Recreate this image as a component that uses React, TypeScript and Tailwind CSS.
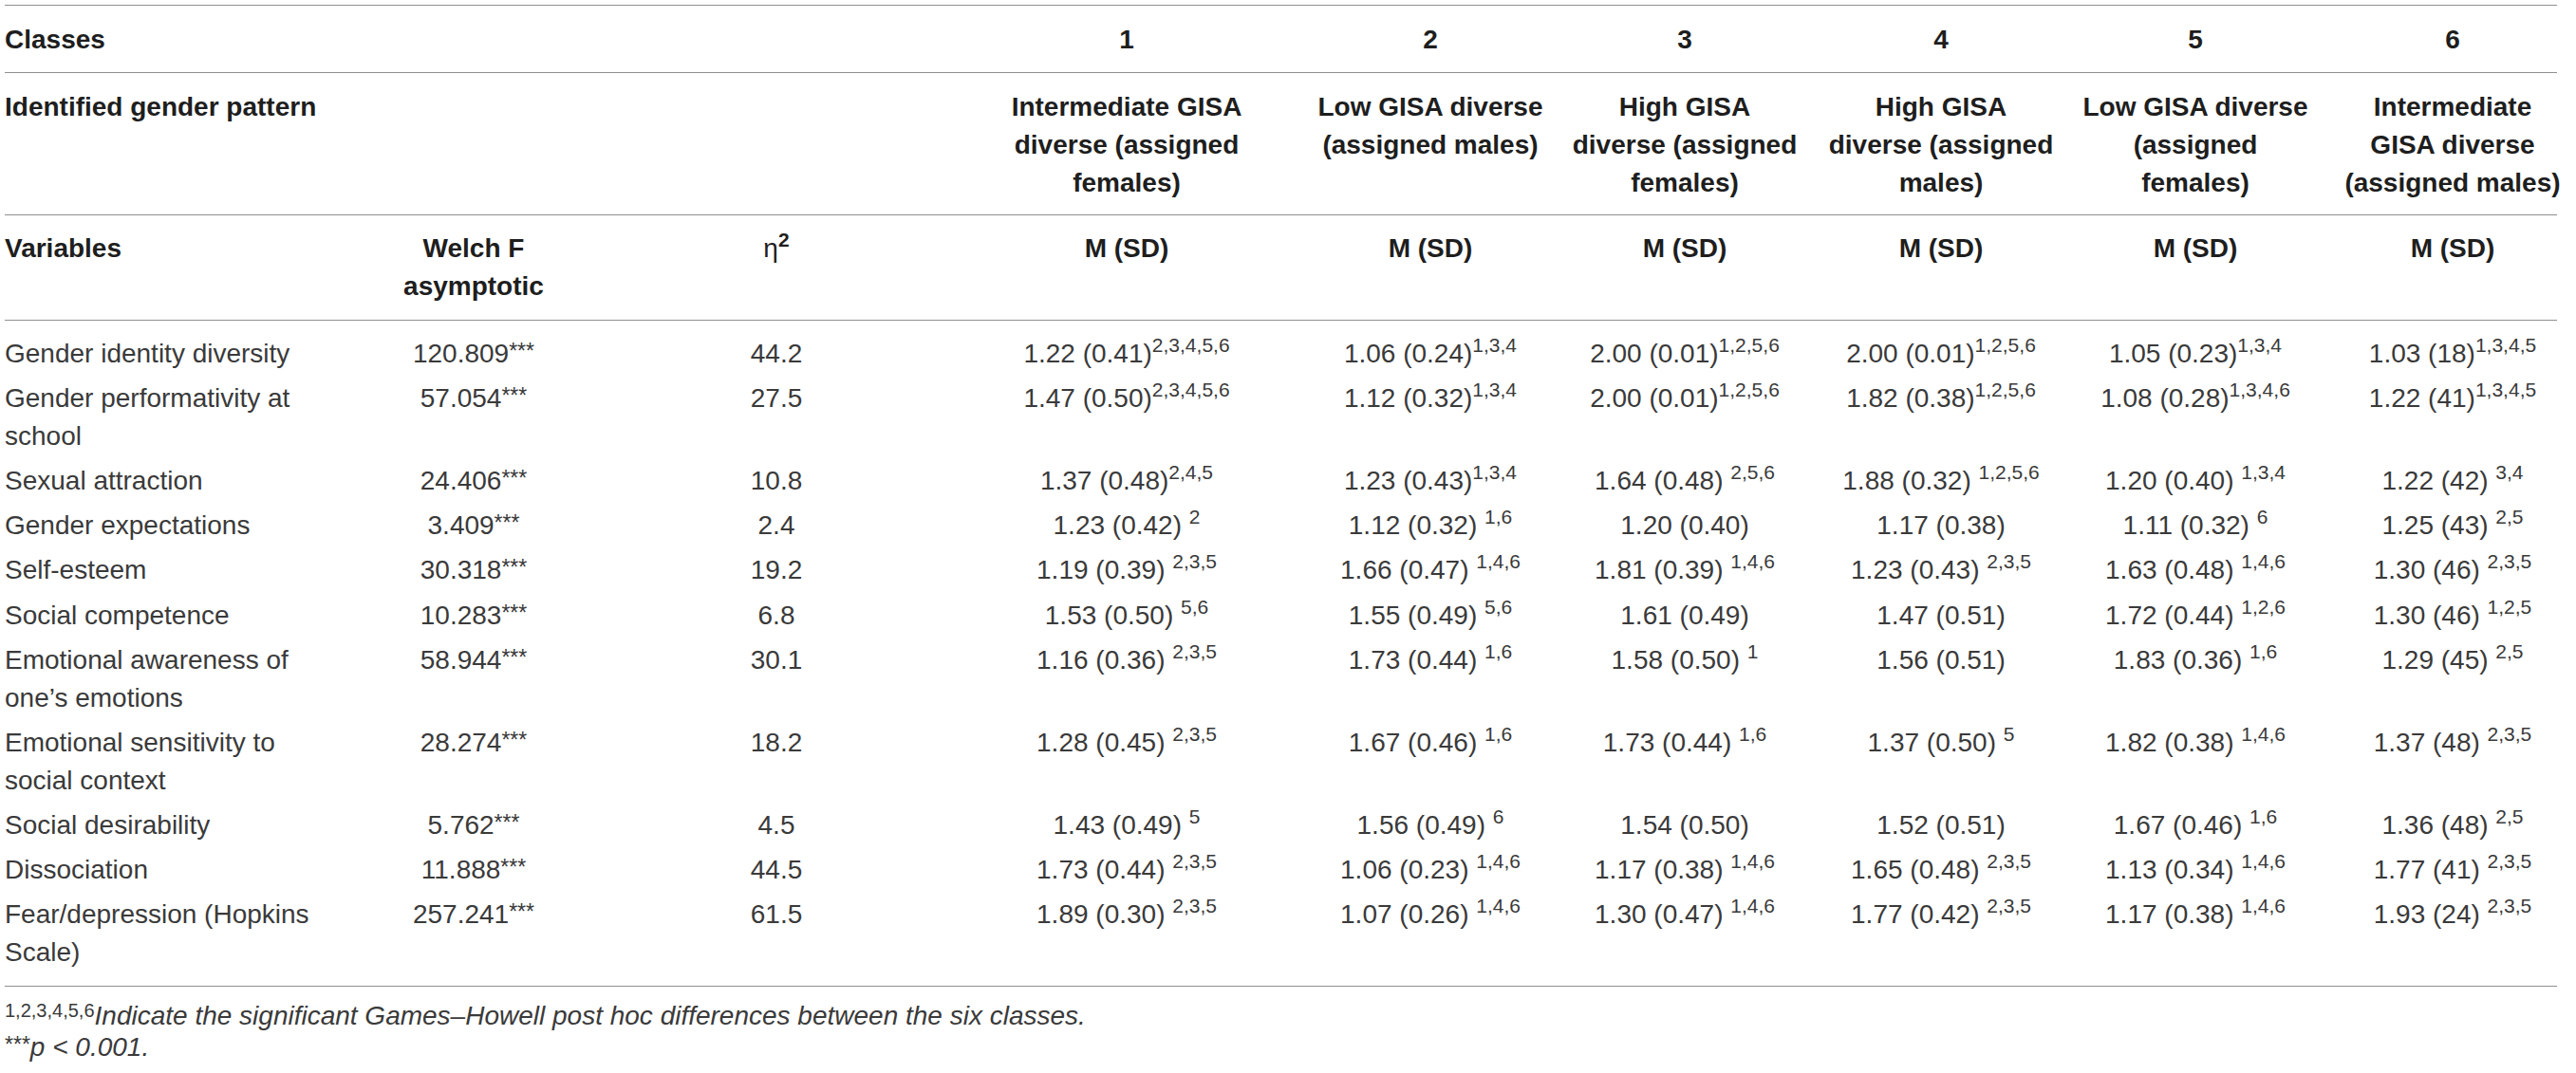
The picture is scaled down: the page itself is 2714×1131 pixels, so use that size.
import React from "react";

type Val = [string, string];
type Row = { name: string; f: string; eta: string; v: Val[] };

const rows: Row[] = [
  { name: "Gender identity diversity", f: "120.809", eta: "44.2", v: [["1.22 (0.41)", "2,3,4,5,6"], ["1.06 (0.24)", "1,3,4"], ["2.00 (0.01)", "1,2,5,6"], ["2.00 (0.01)", "1,2,5,6"], ["1.05 (0.23)", "1,3,4"], ["1.03 (18)", "1,3,4,5"]] },
  { name: "Gender performativity at school", f: "57.054", eta: "27.5", v: [["1.47 (0.50)", "2,3,4,5,6"], ["1.12 (0.32)", "1,3,4"], ["2.00 (0.01)", "1,2,5,6"], ["1.82 (0.38)", "1,2,5,6"], ["1.08 (0.28)", "1,3,4,6"], ["1.22 (41)", "1,3,4,5"]] },
  { name: "Sexual attraction", f: "24.406", eta: "10.8", v: [["1.37 (0.48)", "2,4,5"], ["1.23 (0.43)", "1,3,4"], ["1.64 (0.48)", " 2,5,6"], ["1.88 (0.32)", " 1,2,5,6"], ["1.20 (0.40)", " 1,3,4"], ["1.22 (42)", " 3,4"]] },
  { name: "Gender expectations", f: "3.409", eta: "2.4", v: [["1.23 (0.42)", " 2"], ["1.12 (0.32)", " 1,6"], ["1.20 (0.40)", ""], ["1.17 (0.38)", ""], ["1.11 (0.32)", " 6"], ["1.25 (43)", " 2,5"]] },
  { name: "Self-esteem", f: "30.318", eta: "19.2", v: [["1.19 (0.39)", " 2,3,5"], ["1.66 (0.47)", " 1,4,6"], ["1.81 (0.39)", " 1,4,6"], ["1.23 (0.43)", " 2,3,5"], ["1.63 (0.48)", " 1,4,6"], ["1.30 (46)", " 2,3,5"]] },
  { name: "Social competence", f: "10.283", eta: "6.8", v: [["1.53 (0.50)", " 5,6"], ["1.55 (0.49)", " 5,6"], ["1.61 (0.49)", ""], ["1.47 (0.51)", ""], ["1.72 (0.44)", " 1,2,6"], ["1.30 (46)", " 1,2,5"]] },
  { name: "Emotional awareness of one\u2019s emotions", f: "58.944", eta: "30.1", v: [["1.16 (0.36)", " 2,3,5"], ["1.73 (0.44)", " 1,6"], ["1.58 (0.50)", " 1"], ["1.56 (0.51)", ""], ["1.83 (0.36)", " 1,6"], ["1.29 (45)", " 2,5"]] },
  { name: "Emotional sensitivity to social context", f: "28.274", eta: "18.2", v: [["1.28 (0.45)", " 2,3,5"], ["1.67 (0.46)", " 1,6"], ["1.73 (0.44)", " 1,6"], ["1.37 (0.50)", " 5"], ["1.82 (0.38)", " 1,4,6"], ["1.37 (48)", " 2,3,5"]] },
  { name: "Social desirability", f: "5.762", eta: "4.5", v: [["1.43 (0.49)", " 5"], ["1.56 (0.49)", " 6"], ["1.54 (0.50)", ""], ["1.52 (0.51)", ""], ["1.67 (0.46)", " 1,6"], ["1.36 (48)", " 2,5"]] },
  { name: "Dissociation", f: "11.888", eta: "44.5", v: [["1.73 (0.44)", " 2,3,5"], ["1.06 (0.23)", " 1,4,6"], ["1.17 (0.38)", " 1,4,6"], ["1.65 (0.48)", " 2,3,5"], ["1.13 (0.34)", " 1,4,6"], ["1.77 (41)", " 2,3,5"]] },
  { name: "Fear/depression (Hopkins Scale)", f: "257.241", eta: "61.5", v: [["1.89 (0.30)", " 2,3,5"], ["1.07 (0.26)", " 1,4,6"], ["1.30 (0.47)", " 1,4,6"], ["1.77 (0.42)", " 2,3,5"], ["1.17 (0.38)", " 1,4,6"], ["1.93 (24)", " 2,3,5"]] },
];

const GRID = "grid grid-cols-[384px_220px_418px_320px_294px_269px_269px_269px_261px]";
const PAD = [
  "pr-[44px] text-left",
  "text-center",
  "text-center",
  "px-[20px] text-center",
  "pl-[35px] pr-[9px] text-center",
  "pl-[14px] pr-[15px] text-center",
  "pl-[15px] pr-[14px] text-center",
  "pl-[11.5px] pr-[12.5px] text-center",
  "pl-[21px] pr-[10px] text-center",
];

const Line = () => <div className="h-px w-[2689px] bg-[#8f8f8f]" />;

const Sup = ({ children }: { children: React.ReactNode }) => (
  <span className="relative -top-[11px] text-[21px] leading-none">{children}</span>
);

const Stars = () => (
  <span className="relative -top-[4px] text-[23px] leading-none">***</span>
);

function Cell({ val }: { val: Val }) {
  const [main, sup] = val;
  const space = sup.startsWith(" ");
  const s = sup.trim();
  return (
    <>
      {main}
      {space ? " " : ""}
      {s ? <Sup>{s}</Sup> : null}
    </>
  );
}

const headPatterns = [
  "Intermediate GISA diverse (assigned females)",
  "Low GISA diverse (assigned males)",
  "High GISA diverse (assigned females)",
  "High GISA diverse (assigned males)",
  "Low GISA diverse (assigned females)",
  "Intermediate GISA diverse (assigned males)",
];

export default function App() {
  return (
    <div className="min-h-screen bg-white pl-[5px] pt-[5px] font-['Liberation_Sans',Arial,Helvetica,sans-serif] text-[28px] leading-[40px] text-[#3a3a3a]">
      <Line />
      {/* Row: Classes */}
      <div className={`${GRID} pt-[16px] pb-[14px] font-bold text-[#1e1e1e]`}>
        <div className={PAD[0]}>Classes</div>
        <div className={PAD[1]} />
        <div className={PAD[2]} />
        {[1, 2, 3, 4, 5, 6].map((n, i) => (
          <div key={n} className={PAD[i + 3]}>
            {n}
          </div>
        ))}
      </div>
      <Line />
      {/* Row: Identified gender pattern */}
      <div className={`${GRID} pt-[16px] pb-[13px] font-bold text-[#1e1e1e]`}>
        <div className={`${PAD[0]} whitespace-nowrap`}>Identified gender pattern</div>
        <div className={PAD[1]} />
        <div className={PAD[2]} />
        {headPatterns.map((t, i) => (
          <div key={i} className={PAD[i + 3]}>
            {t}
          </div>
        ))}
      </div>
      <Line />
      {/* Row: Variables */}
      <div className={`${GRID} pt-[15px] pb-[15px] font-bold text-[#1e1e1e]`}>
        <div className={PAD[0]}>Variables</div>
        <div className={PAD[1]}>Welch F asymptotic</div>
        <div className={PAD[2]}>
          <span className="font-normal">η</span>
          <Sup>2</Sup>
        </div>
        {[0, 1, 2, 3, 4, 5].map((i) => (
          <div key={i} className={PAD[i + 3]}>
            M (SD)
          </div>
        ))}
      </div>
      <Line />
      {/* Body */}
      <div className="pt-[11px] pb-[11px]">
        {rows.map((r) => (
          <div key={r.name} className={`${GRID} py-[3.6px]`}>
            <div className={PAD[0]}>{r.name}</div>
            <div className={PAD[1]}>
              {r.f}
              <Stars />
            </div>
            <div className={PAD[2]}>{r.eta}</div>
            {r.v.map((v, i) => (
              <div key={i} className={PAD[i + 3]}>
                <Cell val={v} />
              </div>
            ))}
          </div>
        ))}
      </div>
      <Line />
      {/* Footnotes */}
      <div className="pt-[13.5px] leading-[33px]">
        <div>
          <span className="relative -top-[8px] text-[20px] leading-none">1,2,3,4,5,6</span>
          <span className="italic">
            Indicate the significant Games–Howell post hoc differences between the six classes.
          </span>
        </div>
        <div className="italic">
          <span className="relative -top-[4px] text-[23px] not-italic leading-none">***</span>p &lt; 0.001.
        </div>
      </div>
    </div>
  );
}
